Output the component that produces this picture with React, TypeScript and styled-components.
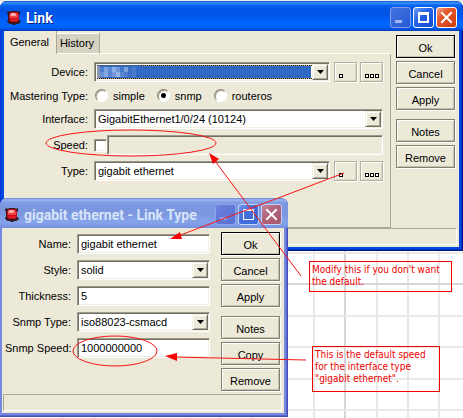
import React, { useState } from "react";
import styled, { createGlobalStyle, css } from "styled-components";

const GlobalStyle = createGlobalStyle`
  * { box-sizing: border-box; }
  body { margin: 0; background: #fff; }
  body, button, input, select {
    font-family: "Liberation Sans", Arial, sans-serif;
    font-size: 11px;
    line-height: 14px;
    color: #000;
  }
`;

const Desktop = styled.main`
  position: relative;
  min-height: 100vh;
  overflow: hidden;
`;

const Layer = styled.svg`
  position: absolute;
  top: 0;
  left: 0;
  pointer-events: none;
`;

/* ---------- window frame ---------- */

const Frame = styled.section<{ $active?: boolean }>`
  position: absolute;
  display: flex;
  flex-direction: column;
  border-radius: 7px 7px 0 0;
  overflow: hidden;
  ${p => p.$active
    ? css`
        top: 1px;
        left: 0;
        right: 0;
        padding: 0 4px 4px;
        background: #0148dc;
        box-shadow: inset -1px -1px 0 #00138c, inset 1px 0 0 #0831d9, inset -2px -2px 0 #0134b8;
      `
    : css`
        top: 198px;
        left: 0;
        width: 288px;
        padding: 0 4px 4px 2px;
        background: #7589e0;
        box-shadow: inset -1px -1px 0 #4d4bb5, inset -2px -2px 0 #5a67cf;
      `}
`;

const TitleBar = styled.header<{ $active?: boolean }>`
  display: flex;
  align-items: center;
  gap: 2px;
  height: 30px;
  ${p => p.$active
    ? css`
        margin: 0 -4px;
        padding: 3px 6px 0 7px;
        color: #fff;
        background: linear-gradient(#0a58d8 0, #3d95ff 2px, #0a66f0 4px, #0055e5 8px, #0056ea 14px, #0066ff 22px, #0064fc 26px, #0048d0 29px, #003dc0 30px);
      `
    : css`
        margin: 0 -4px 0 -2px;
        padding: 3px 6px 0 5px;
        color: #d8e4f8;
        background: linear-gradient(#7283d8 0, #9db6f2 2px, #829ee4 4px, #7a96df 9px, #7b97e0 16px, #86a4ec 24px, #7c98e2 28px, #7489dc 30px);
      `}
`;

const Title = styled.h1<{ $active?: boolean }>`
  flex: 1;
  margin: 0 0 0 3px;
  font: bold 14px/18px Roboto, sans-serif;
  white-space: nowrap;
  text-shadow: ${p => (p.$active ? "1px 1px 0 #0a1f8a" : "none")};
`;

const CaptionButton = styled.button<{ $kind: string; $active?: boolean }>`
  display: grid;
  place-items: center;
  width: 21px;
  height: 21px;
  padding: 0;
  border: 1px solid #fff;
  border-radius: 3px;
  ${p => p.$active
    ? css`
        border-color: ${p.$kind === "min" ? "#7f9de8" : "#fff"};
        background: ${p.$kind === "close"
          ? "linear-gradient(135deg, #f0a088, #e4572e 35%, #d03c10)"
          : p.$kind === "min"
            ? "linear-gradient(135deg, #4573e0, #2458d4)"
            : "linear-gradient(135deg, #6f9ff8, #2663e8 40%, #1248d0)"};
      `
    : css`
        border-color: ${p.$kind === "min" ? "#8ba3e8" : "#c3d1f5"};
        background: ${p.$kind === "close"
          ? "linear-gradient(135deg, #c08a9c, #b0647c 40%, #a8586c)"
          : p.$kind === "min"
            ? "linear-gradient(135deg, #6a80dc, #5a70d2)"
            : "linear-gradient(135deg, #6f94ec, #4470e0 40%, #3c68d8)"};
      `}
`;

const Gem = () => (
  <svg width="14" height="14" viewBox="0 0 14 14" aria-hidden="true">
    <path d="M1 0l2 1 1-1h6l1 1 2-1v3l-1 1v5l2 1-1 2-2 1H9l-1 1H6l-1-1H3l-2-1-1-2 1-1V4L0 2z" fill="#30181c" />
    <path d="M4 1h6l2 2v6l-2 2H4L2 9V3z" fill="#c01020" />
    <path d="M4 2h6l1 2v3H3V4z" fill="#f04040" />
    <path d="M4 2h5v3H3z" fill="#f8989a" />
    <path d="M5 3h2v1H5z" fill="#ffe0e0" />
    <path d="M4 8h7v2H4z" fill="#e01828" />
  </svg>
);

const CaptionIcon = ({ kind, dim }: { kind: string; dim?: boolean }) => (
  <svg width="19" height="19" viewBox="0 0 19 19" aria-hidden="true">
    {kind === "min" && <path d="M4 12h7v3H4z" fill={dim ? "#8ba3ea" : "#9fb6f0"} />}
    {kind === "max" && (
      <path
        d={dim ? "M4.500 14.500v-10h10v10zM4 5.500h11" : "M5 14V5h9v9zM4 6h11"}
        fill="none"
        stroke="#fff"
        strokeWidth={dim ? 1 : 2}
      />
    )}
    {kind === "close" && <path d="M5 5l9 9m0-9l-9 9" stroke="#fff" strokeWidth="2" strokeLinecap="square" />}
  </svg>
);

const Caption = ({ title, active }: { title: string; active?: boolean }) => (
  <TitleBar $active={active}>
    <Gem />
    <Title $active={active}>{title}</Title>
    {[["min", "Minimize"], ["max", "Maximize"], ["close", "Close"]].map(([kind, label]) => (
      <CaptionButton key={kind} type="button" $kind={kind} $active={active} aria-label={label} disabled={kind === "min"}>
        <CaptionIcon kind={kind} dim={!active} />
      </CaptionButton>
    ))}
  </TitleBar>
);

/* ---------- window contents ---------- */

const Client = styled.div`
  background: #ece9d8;
  padding: 0 2px 2px 1px;
`;

const Columns = styled.div<{ $gap: number }>`
  display: grid;
  grid-template-columns: minmax(0, 1fr) 59px;
  gap: ${p => p.$gap}px;
  padding-right: 2px;
`;

const StatusBar = styled.footer`
  height: 17px;
  border: 1px solid;
  border-color: #aca899 #fff #fff #aca899;
`;

const ActionColumn = styled.div`
  display: flex;
  flex-direction: column;
  gap: 3px;
  padding-top: 4px;
`;

const ActionButton = styled.button<{ $primary?: boolean; $spaced?: boolean }>`
  height: 23px;
  padding: 2px 0 0;
  margin-top: ${p => (p.$spaced ? 6 : 0)}px;
  background: #ece9d8;
  border: 1px solid ${p => (p.$primary ? "#000" : "#858170")};
  box-shadow: inset 1px 1px 0 #fff, inset -1px -1px 0 #c5c1b0, 1px 1px 0 #fff;
`;

const Actions = ({ names }: { names: string[] }) => (
  <ActionColumn>
    {names.map(name => (
      <ActionButton key={name} type="button" $primary={name === "Ok"} $spaced={name === "Notes"}>
        {name}
      </ActionButton>
    ))}
  </ActionColumn>
);

const Tabs = styled.div`
  display: flex;
  align-items: flex-end;
  height: 23px;
`;

const Tab = styled.button<{ $selected?: boolean }>`
  width: ${p => (p.$selected ? 52 : 43)}px;
  height: ${p => (p.$selected ? 23 : 21)}px;
  padding: 0 2px ${p => (p.$selected ? 1 : 0)}px 0;
  border: 0 solid #aca899;
  border-right-width: 1px;
  background: ${p => (p.$selected ? "#ece9d8" : "#d6d2c2")};
  box-shadow: ${p => (p.$selected ? "none" : "inset 0 1px 0 #fff")};
  border-bottom: ${p => (p.$selected ? "0" : "1px solid #fff")};
`;

const TabRule = styled.div`
  flex: 1;
  border-bottom: 1px solid #fff;
`;

const TabPanel = styled.div`
  padding: 8px 7px 46px 5px;
  border: solid #aca899;
  border-width: 0 1px 1px 0;
`;

const LinkForm = styled.form`
  display: grid;
  grid-template-columns: 78px minmax(0, 1fr);
  grid-template-rows: 20px 15px repeat(3, 20px);
  gap: 6px;
  align-items: center;
`;

const TypeForm = styled.form`
  display: grid;
  grid-template-columns: 66px minmax(0, 1fr);
  grid-auto-rows: 20px;
  gap: 6px;
  align-items: center;
  align-content: start;
  padding: 6px 0 36px 2px;
`;

const Label = styled.label`
  text-align: right;
  white-space: nowrap;
`;

const Line = styled.div`
  display: flex;
  align-items: center;
  gap: 4px;
`;

const sunken = css`
  border: 1px solid;
  border-color: #9d9a8c #fff #fff #9d9a8c;
  box-shadow: inset 1px 1px 0 #716f64, inset -1px -1px 0 #f1efe2;
  border-radius: 0;
`;

const TextBox = styled.input`
  ${sunken}
  width: 100%;
  min-width: 0;
  height: 20px;
  padding: 0 3px;
  background: #fff;
  &:disabled { background: #ece9d8; }
`;

const ComboBox = styled.div`
  position: relative;
  flex: 1;
  min-width: 0;
`;

const ComboSelect = styled.select<{ $filled?: boolean }>`
  ${sunken}
  appearance: none;
  display: block;
  width: 100%;
  height: 20px;
  padding: 0 20px 0 3px;
  background: #fff;
  ${p => p.$filled && css`
    background: linear-gradient(#316ac5, #316ac5) 2px 2px / calc(100% - 20px) 14px no-repeat #fff;
  `}
`;

const DropGlyph = styled.span`
  position: absolute;
  top: 2px;
  right: 2px;
  display: grid;
  place-items: center;
  width: 16px;
  height: 16px;
  background: #ece9d8;
  border: 1px solid;
  border-color: #f1efe2 #716f64 #716f64 #f1efe2;
  box-shadow: inset 1px 1px 0 #fff, inset -1px -1px 0 #aca899;
  pointer-events: none;
`;

const Redaction = styled.svg`
  position: absolute;
  top: 3px;
  left: 3px;
  width: calc(100% - 21px);
  height: 14px;
  pointer-events: none;
`;

const cells = ["#4f80cd", "#7fa4df", "#5f8dd5", "#8db0e6", "#6f97da", "#4478cb", "#7da2de", "#3c70c6", "#6a93d8", "#86a9e2", "#5585d0", "#7398dc", "#93b3e8", "#5b89d2", "#4c7ecd", "#3b6fc8"];

const Combo = ({ id, value, redacted }: { id: string; value: string; redacted?: boolean }) => (
  <ComboBox>
    <ComboSelect id={id} $filled={redacted} defaultValue={value}>
      <option value={value}>{value}</option>
    </ComboSelect>
    {redacted && (
      <Redaction aria-hidden="true">
        <rect x="0" y="0" width="3" height="14" fill="#8b96ab" />
        <rect x="3" y="2" width="36" height="10" fill="#4a7ccb" />
        {cells.map((fill, i) => (
          <rect key={i} x={3 + (i % 8) * 4} y={2 + Math.floor(i / 8) * 5} width="4" height="5" fill={fill} />
        ))}
        <path d="M0 .5h600M0 13.500h600" stroke="#e0a050" />
        <path d="M0 .5h600M0 13.500h600" stroke="#101830" strokeDasharray="1 1" />
        <path d="M0 .5h44" stroke="#4a6080" />
      </Redaction>
    )}
    <DropGlyph>
      <svg width="7" height="4" viewBox="0 0 7 4" aria-hidden="true"><path d="M0 0h7L3.500 4z" /></svg>
    </DropGlyph>
  </ComboBox>
);

const ToolPair = styled.div`
  display: flex;
  gap: 3px;
`;

const ToolButton = styled.button`
  display: block;
  width: 23px;
  height: 20px;
  padding: 0 0 0 4px;
  border: 1px solid #b5b1a0;
  background: #ece9d8;
  box-shadow: inset 1px 1px 0 #fff, inset -1px -1px 0 #dcd8c6, 1px 1px 0 #fff;
`;

const ToolIcon = ({ count }: { count: number }) => (
  <svg width="15" height="18" viewBox="0 0 15 18" display="block" aria-hidden="true">
    {Array.from({ length: count }, (_, i) => (
      <rect key={i} x={0.5 + i * 5} y="11.500" width="3" height="3" fill="#fff" stroke="#000" />
    ))}
  </svg>
);

const Tools = () => (
  <ToolPair>
    <ToolButton type="button" aria-label="Open"><ToolIcon count={1} /></ToolButton>
    <ToolButton type="button" aria-label="Browse"><ToolIcon count={3} /></ToolButton>
  </ToolPair>
);

const RadioGroup = styled.div`
  display: flex;
  align-items: center;
  gap: 12px;
  padding-left: 1px;
`;

const RadioLabel = styled.label`
  display: flex;
  align-items: center;
  gap: 5px;
`;

const Radio = styled.input`
  appearance: none;
  width: 13px;
  height: 13px;
  margin: 0;
  border: 1px solid;
  border-color: #8a8778 #fff #fff #8a8778;
  border-radius: 50%;
  background: #fff;
  box-shadow: inset 1px 1px 0 #a8a596;
  &:checked { background: radial-gradient(circle, #000 2px, #fff 3px); }
`;

const Check = styled.input`
  ${sunken}
  appearance: none;
  flex: none;
  width: 13px;
  height: 13px;
  margin: 0;
  background: #fff;
`;

const SpeedLine = styled(Line)`
  gap: 0;
`;

/* ---------- annotations ---------- */

const Note = styled.p<{ $y: number; $x: number; $w: number; $h: number }>`
  position: absolute;
  top: ${p => p.$y}px;
  left: ${p => p.$x}px;
  width: ${p => p.$w}px;
  min-height: ${p => p.$h}px;
  margin: 0;
  padding: 2px 0 0 2px;
  border: 1px solid #f00000;
  color: #f00000;
  font: 10px/12px "DejaVu Sans Condensed", "DejaVu Sans", sans-serif;
  white-space: nowrap;
`;

const verticals = [31, 62, 94, 125, 157, 188, 219, 251, 282, 313, 344, 376, 407, 438];
const horizontals = [0, 252, 283, 315, 346, 378, 409];

const CanvasGrid = () => (
  <Layer width="100%" height="100%" aria-hidden="true">
    {verticals.map(x => <rect key={x} x={x} y="0" width="2" height="100%" fill={x === 344 ? "#d6d6d6" : "#e9e9e9"} />)}
    {horizontals.map(y => <rect key={y} x="0" y={y} width="100%" height="2" fill={y === 283 ? "#d6d6d6" : "#e9e9e9"} />)}
  </Layer>
);

const Marks = () => (
  <Layer width="463" height="418" fill="none" stroke="#fa1414" aria-hidden="true">
    <ellipse cx="131" cy="143" rx="85" ry="13" />
    <ellipse cx="115" cy="351" rx="42" ry="15" />
    <path d="M344 173L178 236M301 276L212 157M306 360L174 357" />
    <path d="M170 239l10-7 2 7zM209 153l10 6-6 5zM165 356l12-3v8z" fill="#fa0000" stroke="none" />
  </Layer>
);

export default function App() {
  const [mastering, setMastering] = useState("snmp");
  return (
    <>
      <GlobalStyle />
      <Desktop>
        <CanvasGrid />
        <Frame $active>
          <Caption title="Link" active />
          <Client>
            <Columns $gap={5}>
              <div>
                <Tabs role="tablist">
                  <Tab type="button" role="tab" aria-selected="true" $selected>General</Tab>
                  <Tab type="button" role="tab" aria-selected="false">History</Tab>
                  <TabRule />
                </Tabs>
                <TabPanel role="tabpanel">
                  <LinkForm>
                    <Label htmlFor="device">Device:</Label>
                    <Line><Combo id="device" value="" redacted /><Tools /></Line>
                    <Label as="span" id="mastering">Mastering Type:</Label>
                    <RadioGroup role="radiogroup" aria-labelledby="mastering">
                      {["simple", "snmp", "routeros"].map(name => (
                        <RadioLabel key={name}>
                          <Radio type="radio" name="mastering" checked={mastering === name} onChange={() => setMastering(name)} />
                          {name}
                        </RadioLabel>
                      ))}
                    </RadioGroup>
                    <Label htmlFor="interface">Interface:</Label>
                    <Combo id="interface" value="GigabitEthernet1/0/24 (10124)" />
                    <Label htmlFor="speed-on">Speed:</Label>
                    <SpeedLine>
                      <Check id="speed-on" type="checkbox" />
                      <TextBox aria-label="Speed value" disabled />
                    </SpeedLine>
                    <Label htmlFor="type">Type:</Label>
                    <Line><Combo id="type" value="gigabit ethernet" /><Tools /></Line>
                  </LinkForm>
                </TabPanel>
              </div>
              <Actions names={["Ok", "Cancel", "Apply", "Notes", "Remove"]} />
            </Columns>
            <StatusBar />
          </Client>
        </Frame>

        <Frame>
          <Caption title="gigabit ethernet - Link Type" />
          <Client>
            <Columns $gap={11}>
              <TypeForm>
                <Label htmlFor="name">Name:</Label>
                <TextBox id="name" defaultValue="gigabit ethernet" />
                <Label htmlFor="style">Style:</Label>
                <Combo id="style" value="solid" />
                <Label htmlFor="thickness">Thickness:</Label>
                <TextBox id="thickness" defaultValue="5" />
                <Label htmlFor="snmp-type">Snmp Type:</Label>
                <Combo id="snmp-type" value="iso88023-csmacd" />
                <Label htmlFor="snmp-speed">Snmp Speed:</Label>
                <TextBox id="snmp-speed" defaultValue="1000000000" />
              </TypeForm>
              <Actions names={["Ok", "Cancel", "Apply", "Notes", "Copy", "Remove"]} />
            </Columns>
            <StatusBar />
          </Client>
        </Frame>

        <Note $x={309} $y={261} $w={143} $h={31}>Modify this if you don't want<br />the default.</Note>
        <Note $x={312} $y={346} $w={128} $h={46}>This is the default speed<br />for the interface type<br />"gigabit ethernet".</Note>
        <Marks />
      </Desktop>
    </>
  );
}
